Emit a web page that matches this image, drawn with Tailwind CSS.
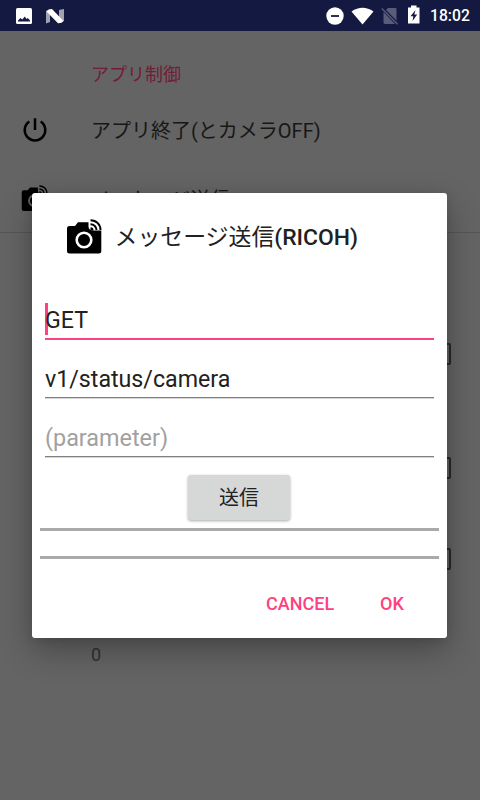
<!DOCTYPE html>
<html lang="ja">
<head>
<meta charset="utf-8">
<title>メッセージ送信</title>
<script src="https://cdn.jsdelivr.net/npm/@tailwindcss/browser@4"></script>
</head>
<body class="w-[480px] h-[800px] overflow-hidden bg-[#646464] font-[Roboto,'Noto_Sans_CJK_JP',sans-serif]">
<svg class="hidden">
  <symbol id="camera" viewBox="0 0 36 36">
    <path d="M3.500 7H9L12 3.300H22.500V7.500C22.500 10 24.500 11.500 27 11.500H35.300V32Q35.300 34.500 32.800 34.500H3.500Q1 34.500 1 32V9.500Q1 7 3.500 7Z"/>
    <path d="M24.500 1.300C30.500 1.300 34.500 5.500 34.500 11M24.500 5.300C28 5.300 30.500 8 30.500 11" fill="none" stroke="currentColor" stroke-width="2"/>
    <path d="M24.500 8.300A3 3 0 0 1 27.500 11.500H24.500Z"/>
  </symbol>
</svg>
<div class="relative w-[480px] h-[800px] flex flex-col">
  <header class="h-[31px] bg-[#141941] flex items-center text-white shrink-0">
    <svg class="ml-4 w-4 h-4" viewBox="0 0 16 16"><rect width="16" height="16" rx="1.500" fill="#fff"/><path d="M2 13.500V12.500L4.500 10L6.300 11.500L8.800 8.500L10.500 11L11.800 10L14 12.500V13.500Z" fill="#141941"/></svg>
    <svg class="ml-[13px] w-[20px] h-[16px]" viewBox="0 0 20 16"><path d="M1 3L5 1V14L1 15.500ZM14 2L19 1V13L14 15Z" fill="#a1a3b3"/><path d="M1.500 3.500Q3 .8 7 1L18.500 13Q17 15.500 13 15.300Z" fill="#fff"/></svg>
    <div class="ml-auto flex items-center pr-[10px]">
      <svg class="w-[18px] h-[18px]" viewBox="0 0 18 18"><circle cx="9" cy="9" r="8.700" fill="#fff"/><path d="M5 9H13" stroke="#141941" stroke-width="1.800"/></svg>
      <svg class="ml-[7px] w-[23px] h-[18px]" viewBox="0 0 23 18"><path d="M.5 4.500Q11.500-3 22.500 4.500L11.500 17.500Z" fill="#fff"/></svg>
      <svg class="ml-[7px] w-[18px] h-[18px]" viewBox="0 0 18 18"><path d="M7 1H14.500Q15.500 1 15.500 2V13.500L5 3ZM2.500 5L14 17H4Q2.500 17 2.500 15.500Z" fill="#595d79"/><path d="M4 4L15 15L15.500 13.500V15.500Z" fill="#595d79"/><path d="M.8 1.500L16.500 17.300" stroke="#595d79" stroke-width="1.400"/></svg>
      <svg class="ml-[9px] mb-[3px] w-[12px] h-[19px]" viewBox="0 0 12 19"><path d="M0 2.500H3V.5H8.500V2.500H11.500V18.500H0Z" fill="#fff"/><path d="M7.500 5L2.500 11.200H5.300L4.500 16L9.200 9.500H6.300Z" fill="#141941"/></svg>
      <span class="ml-[10px] text-[15.700px] leading-[18px] font-medium w-[40px] whitespace-nowrap">18:02</span>
    </div>
  </header>
  <main class="flex-1 flex flex-col text-[#171717]">
    <h2 class="mt-[31px] h-[26px] pl-[91px] text-[18px] leading-[26px] text-[#721c38]">アプリ制御</h2>
    <div class="mt-[8px] h-[68px] flex items-center pb-[1px]">
      <svg class="ml-[22px] w-[26px] h-[26px] text-black" viewBox="0 0 26 26" fill="none" stroke="currentColor" stroke-width="2.500"><path d="M13 1.200V13M7.300 4.500A10.300 10.300 0 1 0 18.700 4.500"/></svg>
      <span class="ml-[43px] mt-[3px] text-[20px] leading-[28px] whitespace-nowrap">アプリ終了(とカメラOFF)</span>
    </div>
    <div class="h-[69px] border-b border-[#565656] flex items-center">
      <svg class="ml-[21px] mt-[1px] w-[27px] h-[27px] text-black" viewBox="0 0 36 36"><use href="#camera" width="36" height="36"/><circle cx="18" cy="21" r="7.300" fill="none" stroke="#646464" stroke-width="2.600"/></svg>
      <span class="ml-[43px] mt-[3px] text-[20px] leading-[28px]">メッセージ送信</span>
    </div>
    <div class="pt-[110px] pr-[29px] flex flex-col items-end">
      <i class="w-[22px] h-[22px] border-2 border-[#292929] rounded-[2px]"></i>
      <i class="mt-[92px] w-[22px] h-[22px] border-2 border-[#292929] rounded-[2px]"></i>
      <i class="mt-[69px] w-[22px] h-[22px] border-2 border-[#292929] rounded-[2px]"></i>
    </div>
    <p class="mt-[73px] pl-[91px] text-[18px] leading-[24px] text-[#303030]">0</p>
  </main>

  <section class="absolute left-[32px] top-[193px] w-[415px] h-[445px] bg-white rounded-[3px] shadow-[0_12px_32px_rgba(0,0,0,0.3),0_2px_8px_rgba(0,0,0,0.1)] flex flex-col text-[#212121]">
    <div class="h-[90px] pl-[33.500px] flex items-center">
      <svg class="w-[36px] h-[36px] text-black mb-[3px]" viewBox="0 0 36 36"><use href="#camera" width="36" height="36"/><circle cx="18" cy="21" r="7.300" fill="none" stroke="#fff" stroke-width="2.600"/></svg>
      <h1 class="ml-[13px] text-[22.900px] leading-[32px] font-medium whitespace-nowrap"><span class="font-normal">メッセージ送信</span>(RICOH)</h1>
    </div>
    <div class="mx-[13px] flex flex-col text-[23.200px] leading-[32px]">
      <div class="mt-[20px] h-[37px] border-b-2 border-[#ff4081] relative"><i class="absolute left-0 top-0 w-[3px] h-[32px] bg-[#ff4081]"></i><span class="relative block pt-[1px]">GET</span></div>
      <div class="h-[58px] pt-[23px] border-b border-[#808080] shadow-[0_1px_0_#d5d5d5]">v1/status/camera</div>
      <div class="h-[59px] pt-[24px] border-b border-[#808080] shadow-[0_1px_0_#d5d5d5] text-[23.400px] text-[#a1a1a1]">(parameter)</div>
    </div>
    <button class="ml-[156px] mt-[18px] w-[102px] h-[45px] shrink-0 rounded-[3px] bg-[#d6d7d7] shadow-[0_1px_3px_rgba(0,0,0,0.35)] text-[20px] leading-[28px] pt-[1px]">送信</button>
    <div class="mt-[8px] mx-2 h-[31px] border-y-3 border-[#aaa]"></div>
    <div class="flex mt-[33px] text-[18px] leading-[24px] font-medium text-[#ff4081] pl-[234px] gap-[46px]"><span>CANCEL</span><span>OK</span></div>
  </section>
</div>
</body>
</html>
